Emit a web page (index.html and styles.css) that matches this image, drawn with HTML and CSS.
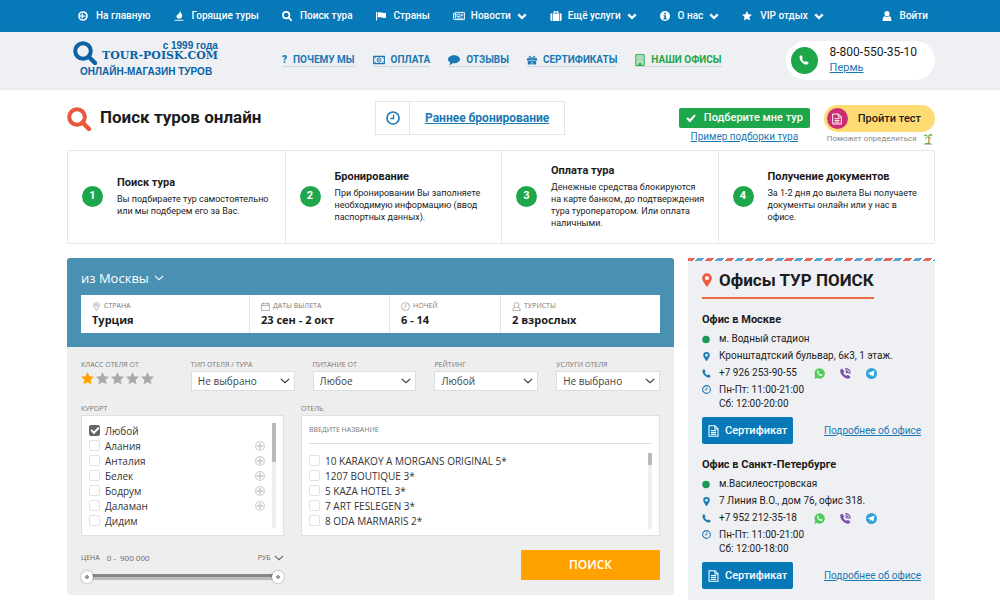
FILE: index.html
```html
<!DOCTYPE html>
<html lang="ru">
<head>
<meta charset="utf-8">
<title>Поиск туров онлайн</title>
<link rel="stylesheet" href="styles.css">
</head>
<body>
<svg class="sprite" aria-hidden="true">
  <symbol id="i-back" viewBox="0 0 16 16"><circle cx="8" cy="8" r="6.4" fill="none" stroke="currentColor" stroke-width="2.6"/><path d="M12 8H5M8 4.6 4.6 8 8 11.4" fill="none" stroke="currentColor" stroke-width="2"/></symbol>
  <symbol id="i-fire" viewBox="0 0 16 16"><path d="M10 0c0 3 3 4 3 7.500 0 3-2 4.700-4.500 4.700C5.500 12.200 3.500 10.500 4 8c.6-2 2.800-2.500 3.800-4.200C8.500 2.600 9.600 1.600 10 0Z" fill="currentColor"/><path d="M1 14h14v2H1z" fill="currentColor" opacity=".75"/></symbol>
  <symbol id="i-search" viewBox="0 0 24 24"><circle cx="10" cy="10" r="7.800" fill="none" stroke="currentColor" stroke-width="4"/><path d="m16 16 6 6" stroke="currentColor" stroke-width="4.400" stroke-linecap="round"/></symbol>
  <symbol id="i-flag" viewBox="0 0 18 16"><path d="M0 1h2v15H0z" fill="currentColor"/><path d="M3 2c5-2 8 2 15 0v9c-7 2-10-2-15 0Z" fill="currentColor"/></symbol>
  <symbol id="i-news" viewBox="0 0 20 14"><path d="M4 1h15v12H3a2 2 0 0 1-2-2V3h3Zm0 2v8" fill="none" stroke="currentColor" stroke-width="1.600"/><path d="M6.500 4h5v4h-5zM13 4h4M13 6.500h4M6 10.500h11" fill="none" stroke="currentColor" stroke-width="1.400"/></symbol>
  <symbol id="i-case" viewBox="0 0 18 16"><path d="M6 4V1.500h6V4" fill="none" stroke="currentColor" stroke-width="2"/><path d="M0 4h3v12H1.500L0 14.500zM4 4h10v12H4zM15 4h3v10.500L16.500 16H15z" fill="currentColor"/></symbol>
  <symbol id="i-info" viewBox="0 0 16 16"><circle cx="8" cy="8" r="8" fill="currentColor"/><path d="M6.600 2.800h3v2.400h-3zM5.600 6.600h4v5h1.200v1.800H5.400v-1.800h1.400V8.400H5.600z" fill="#0779b8"/></symbol>
  <symbol id="i-star" viewBox="0 0 20 20"><path d="m10 0 3 6.600 7 .8-5.200 4.800L16.200 19 10 15.600 3.800 19l1.400-6.800L0 7.400l7-.8Z" fill="currentColor"/></symbol>
  <symbol id="i-user" viewBox="0 0 14 16"><circle cx="7" cy="4.200" r="4.100" fill="currentColor"/><path d="M0 16c0-5 1-7.500 3.200-7.500 2 1.700 5.600 1.700 7.600 0C13 8.500 14 11 14 16Z" fill="currentColor"/></symbol>
  <symbol id="i-caret" viewBox="0 0 12 8"><path d="m1.500 1.500 4.500 4.300 4.500-4.300" fill="none" stroke="currentColor" stroke-width="2.800"/></symbol>
  <symbol id="i-chev" viewBox="0 0 12 7"><path d="m1 1 5 4.600L11 1" fill="none" stroke="currentColor" stroke-width="1.300"/></symbol>
  <symbol id="i-cash" viewBox="0 0 20 14"><path d="M1 1h18v12H1z" fill="none" stroke="currentColor" stroke-width="1.800"/><ellipse cx="10" cy="7" rx="3.200" ry="3.800" fill="none" stroke="currentColor" stroke-width="1.600"/><path d="M10 5v4M3 4.500V3h1.500M15.500 3H17v1.500M3 9.500V11h1.500M15.500 11H17V9.500" fill="none" stroke="currentColor" stroke-width="1.300"/></symbol>
  <symbol id="i-chat" viewBox="0 0 20 16"><path d="M10 0c5.500 0 10 3 10 6.800s-4.500 6.700-10 6.700c-.8 0-1.500 0-2.200-.2C6 15 4 15.800 2 16c1-1 1.600-2.300 1.600-3.800C1.400 11 0 9 0 6.800 0 3 4.500 0 10 0Z" fill="currentColor"/></symbol>
  <symbol id="i-gift" viewBox="0 0 18 16"><path d="M0 5h7v4H0zM11 5h7v4h-7zM1.500 10H7v6H1.500zM11 10h5.500v6H11zM7.800 5h2.400v11H7.800z" fill="currentColor"/><path d="M8.500 5C6 5 3.500 4.500 3.500 2.800 3.500.5 7 .5 8.500 5Zm1 0c2.500 0 5-.5 5-2.200 0-2.300-3.500-2.300-5 2.200Z" fill="none" stroke="currentColor" stroke-width="1.800"/></symbol>
  <symbol id="i-build" viewBox="0 0 16 20"><path d="M1 1h14v18H1z" fill="#b9e0c3" stroke="currentColor" stroke-width="1.600"/><path d="M6 15h4v4H6z" fill="currentColor"/><path d="M4 4.500h8M4 7.500h8M4 10.500h8" stroke="#8fcc9f" stroke-width="1.400" stroke-dasharray="2 1"/></symbol>
  <symbol id="i-phone" viewBox="0 0 16 16"><path d="M1 2.500C2 1 3.500 0 4.200.8l2 3.400c.3.700-.2 1.300-1.500 2.200.8 2 2.900 4 4.900 4.900.9-1.300 1.500-1.800 2.200-1.500l3.400 2c.8.700-.2 2.200-1.700 3.200C8 16.500-.5 8 1 2.500Z" fill="currentColor"/></symbol>
  <symbol id="i-clock" viewBox="0 0 16 16"><circle cx="8" cy="8" r="6.900" fill="none" stroke="currentColor" stroke-width="1.900"/><path d="M8.600 4v4.600H5" fill="none" stroke="currentColor" stroke-width="1.500"/></symbol>
  <symbol id="i-check" viewBox="0 0 14 12"><path d="m1.500 6 4 4 7-8" fill="none" stroke="currentColor" stroke-width="3"/></symbol>
  <symbol id="i-doc" viewBox="0 0 14 16"><path d="M1 1h8l4 4v10H1ZM8.800 1v4.200H13M3.600 7.500h6.800M3.600 10h6.800M3.600 12.500h6.800" fill="none" stroke="currentColor" stroke-width="1.400"/></symbol>
  <symbol id="i-pin" viewBox="0 0 12 16"><path fill-rule="evenodd" d="M6 0a5.800 5.800 0 0 1 5.800 5.800C11.800 8.500 9 12 6.800 15.400q-.8 1-1.600 0C3 12 .2 8.500.2 5.800A5.800 5.800 0 0 1 6 0Zm0 3.300a2.500 2.500 0 1 0 0 5 2.500 2.500 0 0 0 0-5Z" fill="currentColor"/></symbol>
  <symbol id="i-dot" viewBox="0 0 16 16"><circle cx="8" cy="8" r="7.500" fill="#1a9a55"/></symbol>
  <symbol id="i-palm" viewBox="0 0 20 24"><path d="M10 7q4 7 1 14" fill="none" stroke="#b98545" stroke-width="2.400"/><path d="M10 7C7 1 2 2 1 7c3-2 5-2 9 0Zm0 0c1-6 8-7 9-1-3-2-5-1-9 1Zm0 0c-4 0-6 3-5 7 1-3 2-5 5-7Zm0 0c5-1 7 2 7 6-2-3-4-5-7-6Z" fill="#58ad3b"/><path d="M1 23c2-4 15-4 18 0Z" fill="#58ad3b"/></symbol>
  <symbol id="i-opin" viewBox="0 0 12 16"><path d="M6 .8c3 0 5 2.200 5 5 0 3-3 6-5 9.200C4 11.800 1 8.800 1 5.800c0-2.800 2-5 5-5Z" fill="none" stroke="currentColor"/><circle cx="6" cy="5.800" r="2" fill="none" stroke="currentColor"/></symbol>
  <symbol id="i-cal" viewBox="0 0 16 16"><path d="M1 3h14v12H1ZM1 6.500h14M4.500 1v3.500M11.500 1v3.500" fill="none" stroke="currentColor"/></symbol>
  <symbol id="i-oclock" viewBox="0 0 16 16"><circle cx="8" cy="8" r="7" fill="none" stroke="currentColor"/><path d="M9 3.500 8 8.500l-3 3" fill="none" stroke="currentColor"/></symbol>
  <symbol id="i-ouser" viewBox="0 0 16 16"><circle cx="8" cy="5.500" r="4.500" fill="none" stroke="currentColor"/><path d="M5 9.500 1.500 12v3h13v-3L11 9.500" fill="none" stroke="currentColor"/></symbol>
  <symbol id="i-plus" viewBox="0 0 16 16"><circle cx="8" cy="8" r="7" fill="#fff" stroke="#d2d2d2" stroke-width="2"/><path d="M8 3v10M3 8h10" stroke="#d2d2d2" stroke-width="3"/></symbol>
  <symbol id="i-wa" viewBox="0 0 16 16"><path d="M8 .5a7.500 7.500 0 1 1-3.500 14L.5 15.500l1.200-3.700A7.500 7.500 0 0 1 8 .5Z" fill="#51cb5b"/><path d="M5 4c1-1 1.500 0 2 1.500L6.200 6.700c.6 1.200 1.600 2.200 3 2.900l1.200-1c1.600.6 2.200 1 1.800 1.800C10 14 3 8 5 4Z" fill="#fff"/></symbol>
  <symbol id="i-viber" viewBox="0 0 16 16"><path d="M.5 3C1.500 1.200 3.200.6 4.200 2l1.700 2.800c.3.900-.2 1.500-1.100 2 .7 1.900 2.300 3.600 4.500 4.500.9-1 1.500-1.500 2.400-1.200l2.800 1.800c1 1 .2 2.400-1.200 3.400C8-.0 16.800 16-.8 8.500.5 3Z" fill="none"/><path d="M.5 3C1.500 1.200 3.200.6 4.200 2l1.700 2.800c.3.900-.2 1.500-1.100 2 .7 1.900 2.300 3.600 4.500 4.500.9-1 1.500-1.500 2.400-1.200l2.800 1.800c1 1 .2 2.400-1.200 3.400C8 17-1 8.500.5 3Z" fill="#7d4fa8"/><path d="M7.500 1c4.500 0 7.300 3 7.300 7.300M7.800 3.600c3 .2 4.300 1.700 4.500 4.500M8.300 6c1.200.2 1.600.7 1.700 1.800" fill="none" stroke="#7d4fa8" stroke-width="1.700"/></symbol>
  <symbol id="i-tg" viewBox="0 0 16 16"><circle cx="8" cy="8" r="8" fill="#2fa3dc"/><path d="m2.600 7.600 9.800-3.900-1.600 8.600-3-2.200-1.400 1.500-.5-2.600Z" fill="#fff"/></symbol>
</svg>

<nav class="topbar">
  <div class="wrap topbar-row">
    <a class="top-link" href="#"><svg class="ic10"><use href="#i-back"/></svg>На главную</a>
    <a class="top-link" href="#"><svg class="ic10"><use href="#i-fire"/></svg>Горящие туры</a>
    <a class="top-link" href="#"><svg class="ic10"><use href="#i-search"/></svg>Поиск тура</a>
    <a class="top-link" href="#"><svg class="ic10"><use href="#i-flag"/></svg>Страны</a>
    <a class="top-link" href="#"><svg class="ic12"><use href="#i-news"/></svg>Новости<svg class="caret"><use href="#i-caret"/></svg></a>
    <a class="top-link" href="#"><svg class="ic12"><use href="#i-case"/></svg>Ещё услуги<svg class="caret"><use href="#i-caret"/></svg></a>
    <a class="top-link" href="#"><svg class="ic10"><use href="#i-info"/></svg>О нас<svg class="caret"><use href="#i-caret"/></svg></a>
    <a class="top-link" href="#"><svg class="ic10"><use href="#i-star"/></svg>VIP отдых<svg class="caret"><use href="#i-caret"/></svg></a>
    <a class="top-link login" href="#"><svg class="ic10"><use href="#i-user"/></svg>Войти</a>
  </div>
</nav>

<header class="header">
  <div class="wrap header-row">
    <a class="logo" href="#">
      <span class="logo-main">
        <svg class="logo-icon"><use href="#i-search"/></svg>
        <span class="logo-words"><span class="logo-since">с 1999 года</span><span class="logo-name">TOUR-POISK.COM</span></span>
      </span>
      <span class="logo-sub">ОНЛАЙН-МАГАЗИН ТУРОВ</span>
    </a>
    <nav class="subnav">
      <a href="#"><b>?</b>ПОЧЕМУ МЫ</a>
      <a href="#"><svg class="ic12"><use href="#i-cash"/></svg>ОПЛАТА</a>
      <a href="#"><svg class="ic12"><use href="#i-chat"/></svg>ОТЗЫВЫ</a>
      <a href="#"><svg class="ic10"><use href="#i-gift"/></svg>СЕРТИФИКАТЫ</a>
      <a class="green" href="#"><svg class="ic10 tall"><use href="#i-build"/></svg>НАШИ ОФИСЫ</a>
    </nav>
    <div class="phone">
      <span class="phone-badge"><svg class="ic10"><use href="#i-phone"/></svg></span>
      <span class="phone-text"><span class="phone-num">8-800-550-35-10</span><a href="#">Пермь</a></span>
    </div>
  </div>
</header>

<main class="wrap">
  <section class="intro">
    <svg class="title-icon"><use href="#i-search"/></svg>
    <h1>Поиск туров онлайн</h1>
    <div class="early"><span class="early-icon"><svg><use href="#i-clock"/></svg></span><a href="#">Раннее бронирование</a></div>
    <div class="pick">
      <button class="pick-btn" type="button"><svg class="ic10"><use href="#i-check"/></svg>Подберите мне тур</button>
      <a href="#">Пример подборки тура</a>
    </div>
    <div class="test">
      <button class="test-btn" type="button"><span class="test-icon"><svg><use href="#i-doc"/></svg></span>Пройти тест</button>
      <span class="test-note">Поможет определиться <svg class="ic10 tall"><use href="#i-palm"/></svg></span>
    </div>
  </section>

  <ol class="steps">
    <li><span class="num">1</span><div><h2>Поиск тура</h2><p>Вы подбираете тур самостоятельно<br>или мы подберем его за Вас.</p></div></li>
    <li><span class="num">2</span><div><h2>Бронирование</h2><p>При бронировании Вы заполняете<br>необходимую информацию (ввод<br>паспортных данных).</p></div></li>
    <li><span class="num">3</span><div><h2>Оплата тура</h2><p>Денежные средства блокируются<br>на карте банком, до подтверждения<br>тура туроператором. Или оплата<br>наличными.</p></div></li>
    <li><span class="num">4</span><div><h2>Получение документов</h2><p>За 1-2 дня до вылета Вы получаете<br>документы онлайн или у нас в<br>офисе.</p></div></li>
  </ol>

  <div class="columns">
    <form class="finder">
      <div class="finder-head">
        <button class="city" type="button">из Москвы<svg class="chev"><use href="#i-chev"/></svg></button>
        <div class="trip">
          <button type="button"><span class="cap"><svg><use href="#i-opin"/></svg>СТРАНА</span><strong>Турция</strong></button>
          <button type="button"><span class="cap"><svg><use href="#i-cal"/></svg>ДАТЫ ВЫЛЕТА</span><strong>23 сен - 2 окт</strong></button>
          <button type="button"><span class="cap"><svg><use href="#i-oclock"/></svg>НОЧЕЙ</span><strong>6 - 14</strong></button>
          <button type="button"><span class="cap"><svg><use href="#i-ouser"/></svg>ТУРИСТЫ</span><strong>2 взрослых</strong></button>
        </div>
      </div>
      <div class="finder-body">
        <div class="filters">
          <div class="field"><span class="cap">КЛАСС ОТЕЛЯ ОТ</span>
            <div class="stars">
              <button class="on" type="button" aria-label="1 звезда"><svg><use href="#i-star"/></svg></button>
              <button type="button" aria-label="2 звезды"><svg><use href="#i-star"/></svg></button>
              <button type="button" aria-label="3 звезды"><svg><use href="#i-star"/></svg></button>
              <button type="button" aria-label="4 звезды"><svg><use href="#i-star"/></svg></button>
              <button type="button" aria-label="5 звёзд"><svg><use href="#i-star"/></svg></button>
            </div>
          </div>
          <div class="field"><label class="cap" for="type">ТИП ОТЕЛЯ / ТУРА</label><span class="pickbox"><select id="type"><option>Не выбрано</option></select><svg class="chev"><use href="#i-chev"/></svg></span></div>
          <div class="field"><label class="cap" for="meal">ПИТАНИЕ ОТ</label><span class="pickbox"><select id="meal"><option>Любое</option></select><svg class="chev"><use href="#i-chev"/></svg></span></div>
          <div class="field"><label class="cap" for="rate">РЕЙТИНГ</label><span class="pickbox"><select id="rate"><option>Любой</option></select><svg class="chev"><use href="#i-chev"/></svg></span></div>
          <div class="field"><label class="cap" for="serv">УСЛУГИ ОТЕЛЯ</label><span class="pickbox"><select id="serv"><option>Не выбрано</option></select><svg class="chev"><use href="#i-chev"/></svg></span></div>
        </div>
        <div class="lists">
          <div class="field">
            <span class="cap">КУРОРТ</span>
            <div class="panel resorts">
              <div class="rows">
                <div class="row"><label><input type="checkbox" checked>Любой</label></div>
                <div class="row"><label><input type="checkbox">Алания</label><svg class="plus"><use href="#i-plus"/></svg></div>
                <div class="row"><label><input type="checkbox">Анталия</label><svg class="plus"><use href="#i-plus"/></svg></div>
                <div class="row"><label><input type="checkbox">Белек</label><svg class="plus"><use href="#i-plus"/></svg></div>
                <div class="row"><label><input type="checkbox">Бодрум</label><svg class="plus"><use href="#i-plus"/></svg></div>
                <div class="row"><label><input type="checkbox">Даламан</label><svg class="plus"><use href="#i-plus"/></svg></div>
                <div class="row"><label><input type="checkbox">Дидим</label></div>
              </div>
              <div class="scroll"><div class="thumb long"></div></div>
            </div>
          </div>
          <div class="field">
            <label class="cap" for="hotel">ОТЕЛЬ</label>
            <div class="panel hotels">
              <input class="hotel-name" id="hotel" type="text" placeholder="ВВЕДИТЕ НАЗВАНИЕ">
              <div class="hotel-list">
                <div class="rows">
                  <div class="row"><label><input type="checkbox">10 KARAKOY A MORGANS ORIGINAL 5*</label></div>
                  <div class="row"><label><input type="checkbox">1207 BOUTIQUE 3*</label></div>
                  <div class="row"><label><input type="checkbox">5 KAZA HOTEL 3*</label></div>
                  <div class="row"><label><input type="checkbox">7 ART FESLEGEN 3*</label></div>
                  <div class="row"><label><input type="checkbox">8 ODA MARMARIS 2*</label></div>
                </div>
                <div class="scroll"><div class="thumb"></div></div>
              </div>
            </div>
          </div>
        </div>
        <div class="bottom">
          <div class="price">
            <div class="price-row"><span>ЦЕНА</span><span class="sum">0 -&nbsp; 900 000</span><button class="cur" type="button">РУБ<svg class="chev"><use href="#i-chev"/></svg></button></div>
            <div class="slider">
              <input type="range" min="0" max="900000" value="0" aria-label="Цена от">
              <input type="range" min="0" max="900000" value="900000" aria-label="Цена до">
            </div>
          </div>
          <button class="submit" type="submit">ПОИСК</button>
        </div>
      </div>
    </form>

    <aside class="offices">
      <h2 class="offices-title"><svg><use href="#i-pin"/></svg>Офисы ТУР ПОИСК</h2>
      <section class="office">
        <h3>Офис в Москве</h3>
        <p class="line"><svg class="dot"><use href="#i-dot"/></svg>м. Водный стадион</p>
        <p class="line"><svg><use href="#i-pin"/></svg>Кронштадтский бульвар, 6к3, 1 этаж.</p>
        <p class="line"><svg><use href="#i-phone"/></svg>+7 926 253-90-55<span class="social"><a href="#" aria-label="WhatsApp"><svg><use href="#i-wa"/></svg></a><a href="#" aria-label="Viber"><svg><use href="#i-viber"/></svg></a><a href="#" aria-label="Telegram"><svg><use href="#i-tg"/></svg></a></span></p>
        <p class="line hours"><svg><use href="#i-clock"/></svg><span>Пн-Пт: 11:00-21:00<br>Сб: 12:00-20:00</span></p>
        <div class="actions"><button type="button"><svg><use href="#i-doc"/></svg>Сертификат</button><a href="#">Подробнее об офисе</a></div>
      </section>
      <section class="office">
        <h3>Офис в Санкт-Петербурге</h3>
        <p class="line"><svg class="dot"><use href="#i-dot"/></svg>м.Василеостровская</p>
        <p class="line"><svg><use href="#i-pin"/></svg>7 Линия В.О., дом 76, офис 318.</p>
        <p class="line"><svg><use href="#i-phone"/></svg>+7 952 212-35-18<span class="social"><a href="#" aria-label="WhatsApp"><svg><use href="#i-wa"/></svg></a><a href="#" aria-label="Viber"><svg><use href="#i-viber"/></svg></a><a href="#" aria-label="Telegram"><svg><use href="#i-tg"/></svg></a></span></p>
        <p class="line hours"><svg><use href="#i-clock"/></svg><span>Пн-Пт: 11:00-21:00<br>Сб: 12:00-18:00</span></p>
        <div class="actions"><button type="button"><svg><use href="#i-doc"/></svg>Сертификат</button><a href="#">Подробнее об офисе</a></div>
      </section>
    </aside>
  </div>
</main>
</body>
</html>
```
FILE: styles.css
```css
:root {
  --blue: #0779b8;
  --link: #1a78b4;
  --green: #1ea64a;
  --pale: #eff0f3;
  --line: #e6e6e6;
}
* { box-sizing: border-box; }
body {
  margin: 0;
  background: #fff;
  color: #1c1c1c;
  font: 10px/14px Roboto, "Noto Sans", sans-serif;
}
h1, h2, h3, p, ol { margin: 0; padding: 0; }
button, input, select { font: inherit; color: inherit; }
button { border: 0; padding: 0; background: none; cursor: pointer; }
a { color: var(--link); }
svg { display: block; flex: none; }
.sprite { display: none; }
.wrap { padding: 0 65px 0 67px; }
.ic10 { width: 10px; height: 10px; }
.ic12 { width: 12px; height: 10px; }
.tall { height: 12px; }
.chev { width: 10px; height: 6px; }

.topbar { background: var(--blue); color: #fff; }
.topbar-row { display: flex; align-items: center; gap: 23px; height: 32px; padding-left: 78px; padding-right: 72px; }
.top-link { display: flex; align-items: center; gap: 8px; color: #fff; font-weight: 500; text-decoration: none; white-space: nowrap; }
.top-link .ic12 { margin-right: -2px; }
.caret { width: 10px; height: 7px; margin-left: -2px; }
.login { margin-left: auto; }

.header { background: var(--pale); box-shadow: 0 1px 3px #00000026; }
.header-row { display: flex; align-items: center; height: 56px; }
.logo { display: block; padding-left: 6px; color: #0b62a5; text-decoration: none; }
.logo-main { display: flex; align-items: flex-start; gap: 5px; }
.logo-icon { width: 24px; height: 24px; }
.logo-words { display: flex; flex-direction: column; }
.logo-since { align-self: flex-end; font: bold 10px/10px "Liberation Sans", sans-serif; }
.logo-name { font: bold 11px/10px "DejaVu Serif", serif; }
.logo-sub { display: block; padding-left: 7px; font: bold 10px/14px "Liberation Sans", sans-serif; }
.subnav { display: flex; gap: 18px; margin: 0 auto; }
.subnav a { display: flex; align-items: center; gap: 6px; border-bottom: 1px solid #cfd8df; color: var(--link); font-weight: 700; line-height: 12px; text-decoration: none; white-space: nowrap; }
.subnav .green { color: var(--green); }
.phone { display: flex; align-items: center; gap: 12px; height: 39px; padding: 0 18px 0 5px; border-radius: 20px; background: #fff; }
.phone-badge { display: grid; place-items: center; width: 27px; height: 27px; border-radius: 50%; background: var(--green); color: #fff; }
.phone-text { display: flex; flex-direction: column; font-size: 11px; line-height: 15px; }
.phone-num { font-size: 12px; }

.intro { display: flex; align-items: flex-start; height: 62px; padding-top: 13px; }
.title-icon { width: 24px; height: 24px; margin-top: 6px; color: #e7593a; }
h1 { margin: 6px auto 0 9px; font-size: 17px; line-height: 20px; }
.early { display: flex; align-items: center; height: 34px; margin-right: auto; border: 1px solid var(--line); }
.early-icon { display: grid; place-items: center; width: 34px; height: 32px; border-right: 1px solid var(--line); color: var(--link); }
.early-icon svg { width: 14px; height: 14px; }
.early a { padding: 0 15px; font-size: 12px; font-weight: 700; }
.pick { display: flex; flex-direction: column; align-items: center; gap: 2px; margin: 7px 14px 0 0; }
.pick-btn { display: flex; align-items: center; gap: 8px; height: 20px; padding: 0 7px; border-radius: 2px; background: var(--green); color: #fff; font-size: 11px; font-weight: 500; }
.test { display: flex; flex-direction: column; gap: 1px; padding-top: 4px; }
.test-btn { display: flex; align-items: center; gap: 10px; height: 27px; padding: 0 14px 0 3px; border-radius: 14px; background: #ffdc73; color: #1c1c1c; font-size: 11px; font-weight: 500; }
.test-icon { display: grid; place-items: center; width: 21px; height: 21px; border-radius: 50%; background: #cb2d74; color: #fff; }
.test-icon svg { width: 10px; height: 12px; }
.test-note { display: flex; align-items: center; gap: 6px; padding-left: 3px; color: #888; font-size: 8px; line-height: 12px; }

.steps { display: grid; grid-template-columns: repeat(4, 1fr); height: 94px; border: 1px solid var(--line); border-radius: 2px; list-style: none; }
.steps li { display: flex; align-items: center; gap: 14px; padding: 0 10px 2px 14px; }
.steps li + li { border-left: 1px solid var(--line); }
.num { display: grid; flex: none; place-items: center; width: 21px; height: 21px; border-radius: 50%; background: var(--green); color: #fff; font-size: 11px; font-weight: 700; }
.steps h2 { margin-bottom: 3px; font-size: 11px; line-height: 15px; }
.steps p { font-size: 9px; line-height: 12px; white-space: nowrap; }

.columns { display: grid; grid-template-columns: 607fr 247fr; gap: 14px; align-items: start; margin-top: 14px; }
.finder { overflow: hidden; border-radius: 3px; background: #eee; color: #333; font-family: "Open Sans", "Noto Sans", sans-serif; }
.finder-head { padding: 10px 14px 14px; background: #4a90b2; }
.city { display: flex; align-items: center; gap: 5px; margin-bottom: 7px; color: #fff; font-size: 13px; line-height: 20px; }
.trip { display: grid; grid-template-columns: 168fr 140fr 111fr 160fr; background: #fff; }
.trip button { display: block; height: 38px; padding: 2px 11px 0; text-align: left; }
.trip button + button { border-left: 1px solid var(--line); }
.trip strong { display: block; color: #1c1c1c; font-size: 11px; line-height: 18px; }
.cap { display: flex; align-items: center; gap: 3px; color: #777; font-size: 7px; line-height: 10px; }
.cap svg { width: 9px; height: 9px; }
.finder-body { padding: 13px 14px 11px; }
.filters { display: grid; grid-template-columns: 92fr 104fr 104fr 104fr 104fr; gap: 18px; }
.field { min-width: 0; }
.stars { display: flex; gap: 2px; padding-top: 2px; color: #aaa; }
.stars svg { width: 13px; height: 13px; }
.stars .on { color: #ffa200; }
.pickbox { display: grid; align-items: center; border: 1px solid #ddd; background: #fff; margin-top: 1px; }
.pickbox select { grid-area: 1 / 1; width: 100%; height: 18px; padding: 0 6px; border: 0; appearance: none; background: none; color: #444; }
.pickbox .chev { grid-area: 1 / 1; justify-self: end; margin-right: 4px; pointer-events: none; }
.lists { display: grid; grid-template-columns: 203fr 359fr; gap: 17px; margin-top: 13px; }
.panel { height: 121px; margin-top: 1px; border: 1px solid #e0e0e0; background: #fff; }
.resorts { display: flex; gap: 7px; padding: 7px; }
.hotels { padding: 4px 7px 6px; }
.hotel-name { display: block; width: 100%; height: 24px; padding: 0 0 5px; border: 0; border-bottom: 1px solid #ddd; font-size: 7px; }
.hotel-name::placeholder { color: #777; opacity: 1; }
.hotel-list { display: flex; height: 85px; padding-top: 9px; }
.rows { flex: 1; }
.row { display: flex; align-items: center; justify-content: space-between; height: 15px; }
.row label { display: flex; align-items: center; gap: 5px; white-space: nowrap; }
.row input { display: grid; place-items: center; width: 11px; height: 11px; margin: 0; border: 1px solid #e2e2e2; border-radius: 2px; appearance: none; background: #fff; }
.row input:checked { border-color: #666; background: #666; }
.row input:checked::after { content: ""; width: 6px; height: 3px; border: solid #fff; border-width: 0 0 2px 2px; rotate: -45deg; translate: 0 -1px; }
.plus { width: 10px; height: 10px; }
.scroll { width: 4px; background: #f0f0f0; }
.thumb { height: 12px; background: #bbb; }
.thumb.long { height: 39px; }
.bottom { display: flex; align-items: flex-start; justify-content: space-between; margin-top: 14px; }
.price { width: 35%; }
.price-row { display: flex; gap: 7px; color: #666; font-size: 7px; line-height: 16px; }
.sum { font-size: 8px; }
.cur { display: flex; align-items: center; gap: 3px; margin-left: auto; }
.slider { display: grid; align-items: center; height: 14px; margin-top: 4px; background: linear-gradient(#888 50%, #bbb 50%) center / 92% 6px no-repeat; }
.slider input { grid-area: 1 / 1; width: 100%; height: 14px; margin: 0; appearance: none; background: none; pointer-events: none; }
.slider input::-webkit-slider-thumb { width: 12px; height: 12px; border-radius: 50%; appearance: none; background: radial-gradient(#999 0 2px, #fff 2px); box-shadow: 0 0 2px #00000080; pointer-events: auto; }
.submit { width: 24%; height: 30px; border-radius: 1px; background: #ffa200; color: #fff; font-size: 12px; font-weight: 600; }

.offices { padding: 0 14px 11px; background: var(--pale); }
.offices::before { content: ""; display: block; height: 3px; margin: 0 -14px; background: repeating-linear-gradient(135deg, #e0675a 0 5px, #fff 5px 7px, #58a6cf 7px 12px, #fff 12px 14px); }
.offices-title { display: inline-flex; align-items: center; gap: 7px; margin-top: 7px; padding-bottom: 5px; border-bottom: 2px solid #ec6a43; font-size: 17px; line-height: 24px; white-space: nowrap; }
.offices-title svg { width: 10px; height: 14px; color: #f0583a; }
.office { padding-top: 13px; }
.office h3 { margin-bottom: 4px; font-size: 11px; line-height: 16px; }
.line { display: flex; align-items: center; gap: 8px; padding-bottom: 3px; white-space: nowrap; }
.line svg { width: 9px; height: 9px; color: var(--link); }
.line .dot { width: 8px; margin-right: 1px; }
.hours { align-items: flex-start; padding-bottom: 6px; }
.hours svg { margin-top: 2px; }
.social { display: flex; gap: 15px; padding-left: 9px; }
.social svg { width: 11px; height: 11px; }
.actions { display: flex; align-items: center; justify-content: space-between; }
.actions button { display: flex; align-items: center; gap: 6px; height: 27px; padding: 0 6px; border-radius: 2px; background: var(--blue); color: #fff; font-size: 11px; font-weight: 500; }
.actions button svg { width: 11px; height: 12px; }
```
